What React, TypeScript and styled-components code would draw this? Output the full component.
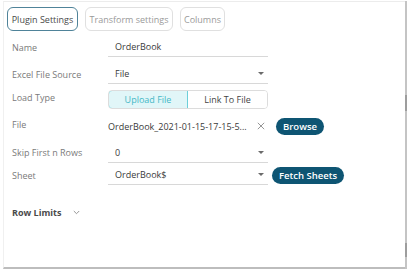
import React from "react";
import styled, { createGlobalStyle } from "styled-components";

const Global = createGlobalStyle`
  html, body { margin: 0; padding: 0; background: #ffffff; }
  body { font-family: "Open Sans", "Liberation Sans", sans-serif; }
  * { box-sizing: border-box; }
`;

const Frame = styled.div`
  width: 409px;
  height: 272px;
  display: flex;
  padding: 1px 0 3px 3px;
`;

const Panel = styled.div`
  flex: 1;
  display: flex;
  flex-direction: column;
  border-top: 1px solid #ececec;
  border-left: 1px solid #f0f0f0;
  border-bottom: 2px solid #bdbdbd;
  padding: 5px 0 0 3px;
`;

const Scrollbar = styled.div`
  width: 2px;
  margin: 0 2px 0 0;
  display: flex;
  flex-direction: column;
  height: 268px;
`;

const Track = styled.div<{ $h: number; $thumb?: boolean }>`
  height: ${(p) => p.$h}px;
  background: ${(p) => (p.$thumb ? "#9d9d9d" : "#c4c4c4")};
`;

const Tabs = styled.div`
  display: flex;
  gap: 7px;
  height: 24px;
`;

const Tab = styled.div<{ $active?: boolean; $w: number }>`
  width: ${(p) => p.$w}px;
  height: 24px;
  display: flex;
  align-items: center;
  justify-content: center;
  font-size: 9px;
  border-radius: 6px;
  color: ${(p) => (p.$active ? "#4a4a4a" : "#9a9a9a")};
  border: ${(p) => (p.$active ? "1.5px solid #4f8399" : "1px solid #e0e0e0")};
  white-space: nowrap;
`;

const Form = styled.div`
  display: flex;
  flex-direction: column;
  padding-left: 5px;
`;

const Row = styled.div<{ $h: number; $mt: number }>`
  display: grid;
  grid-template-columns: 96px 160px auto;
  align-items: center;
  height: ${(p) => p.$h}px;
  margin-top: ${(p) => p.$mt}px;
`;

const Label = styled.div<{ $shift?: number }>`
  font-size: 9px;
  color: #7a7a7a;
  white-space: nowrap;
  position: relative;
  top: ${(p) => p.$shift ?? 0}px;
`;

const Input = styled.div`
  height: 100%;
  display: flex;
  align-items: center;
  justify-content: space-between;
  padding: 0 4px 1px 7px;
  border-bottom: 1px solid #d8d8d8;
  font-size: 9px;
  color: #3a3a3a;
`;

const Caret = styled.span`
  width: 0;
  height: 0;
  border-left: 3.5px solid transparent;
  border-right: 3.5px solid transparent;
  border-top: 3.5px solid #6b6b6b;
`;

const Toggle = styled.div`
  display: grid;
  grid-template-columns: 1fr 1fr;
  height: 19px;
  border: 1px solid #dcdcdc;
  border-radius: 4px;
  overflow: hidden;
`;

const ToggleOpt = styled.div<{ $on?: boolean }>`
  display: flex;
  align-items: center;
  justify-content: center;
  font-size: 9px;
  color: ${(p) => (p.$on ? "#45b8c6" : "#444")};
  background: ${(p) => (p.$on ? "#e1f6f8" : "#fff")};
  border: ${(p) => (p.$on ? "1px solid #6ccfd9" : "none")};
  border-radius: ${(p) => (p.$on ? "4px 0 0 4px" : "0")};
  margin: ${(p) => (p.$on ? "-1px 0 -1px -1px" : "0")};
`;

const FileBox = styled.div`
  display: flex;
  align-items: center;
  justify-content: space-between;
  font-size: 9px;
  color: #3a3a3a;
  padding-right: 3px;
  white-space: nowrap;
`;

const Clear = () => (
  <svg width="8" height="8" viewBox="0 0 8 8">
    <path d="M0.8 0.8 L7.2 7.2 M7.2 0.8 L0.8 7.2" stroke="#8a8a8a" strokeWidth="0.9" />
  </svg>
);

const Pill = styled.div<{ $ml: number }>`
  margin-left: ${(p) => p.$ml}px;
  height: 17px;
  padding: 0 7px;
  border-radius: 9px;
  background: #0e5573;
  color: #fff;
  font-size: 9.5px;
  font-weight: 600;
  display: inline-flex;
  align-items: center;
  justify-self: start;
  white-space: nowrap;
`;

const Section = styled.div`
  display: flex;
  align-items: center;
  gap: 12px;
  margin-top: 21px;
  padding-left: 5px;
  font-size: 9px;
  font-weight: 700;
  color: #4a4a4a;
`;

const Chevron = () => (
  <svg width="7" height="5" viewBox="0 0 7 5">
    <path d="M0.8 1 L3.5 3.7 L6.2 1" fill="none" stroke="#8a8a8a" strokeWidth="0.9" />
  </svg>
);

export default function App() {
  return (
    <>
      <Global />
      <Frame>
        <Panel>
          <Tabs>
            <Tab $active $w={71}>Plugin Settings</Tab>
            <Tab $w={88}>Transform settings</Tab>
            <Tab $w={45}>Columns</Tab>
          </Tabs>
          <Form>
            <Row $h={20} $mt={6}>
              <Label>Name</Label>
              <Input>OrderBook</Input>
            </Row>
            <Row $h={20} $mt={7}>
              <Label>Excel File Source</Label>
              <Input>
                File <Caret />
              </Input>
            </Row>
            <Row $h={20} $mt={5}>
              <Label $shift={-2}>Load Type</Label>
              <Toggle>
                <ToggleOpt $on>Upload File</ToggleOpt>
                <ToggleOpt>Link To File</ToggleOpt>
              </Toggle>
            </Row>
            <Row $h={20} $mt={7}>
              <Label $shift={-2}>File</Label>
              <FileBox>
                OrderBook_2021-01-15-17-15-5...
                <Clear />
              </FileBox>
              <Pill $ml={8}>Browse</Pill>
            </Row>
            <Row $h={20} $mt={7}>
              <Label $shift={-1}>Skip First n Rows</Label>
              <Input>
                0 <Caret />
              </Input>
            </Row>
            <Row $h={20} $mt={2}>
              <Label>Sheet</Label>
              <Input>
                OrderBook$ <Caret />
              </Input>
              <Pill $ml={4}>Fetch Sheets</Pill>
            </Row>
          </Form>
          <Section>
            <span>Row Limits</span>
            <Chevron />
          </Section>
        </Panel>
        <Scrollbar>
          <Track $h={94} />
          <Track $h={16} $thumb />
          <Track $h={132} />
          <Track $h={14} $thumb />
          <Track $h={12} />
        </Scrollbar>
      </Frame>
    </>
  );
}
